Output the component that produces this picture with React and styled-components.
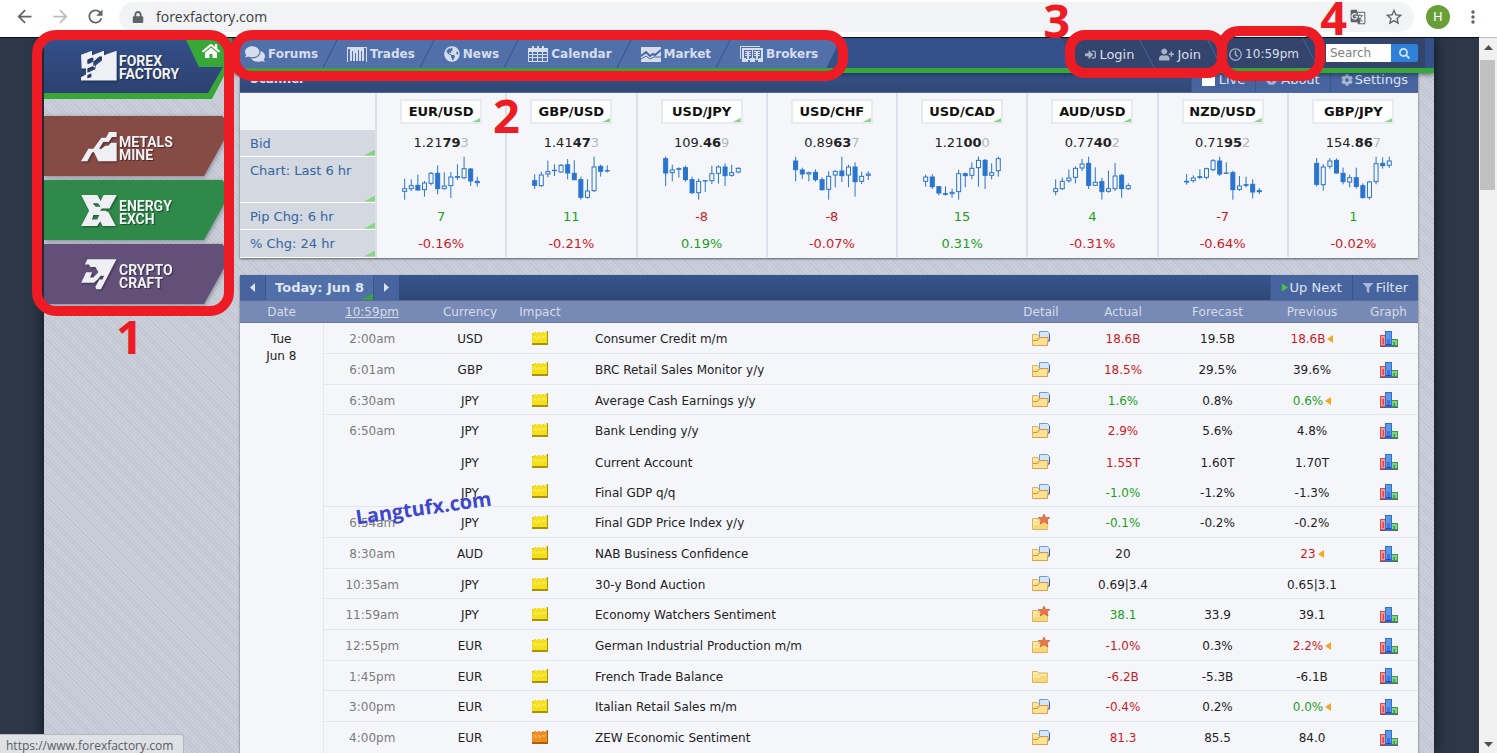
import React from "react";
import styled, { createGlobalStyle, css } from "styled-components";
import {
  FaComments,
  FaSignInAlt,
  FaUserPlus,
  FaRegClock,
  FaCog,
  FaInfoCircle,
  FaHome,
  FaFilter,
  FaGlobeAmericas,
  FaSearch,
  FaLock,
} from "react-icons/fa";
import { MdArrowBack, MdArrowForward, MdRefresh, MdStarBorder, MdMoreVert, MdGTranslate } from "react-icons/md";

const GlobalStyle = createGlobalStyle`
  *, *::before, *::after { box-sizing: border-box; }
  body {
    margin: 0;
    font-family: "DejaVu Sans", Verdana, sans-serif;
    font-size: 12px;
    color: #222;
  }
  a { color: inherit; text-decoration: none; }
  button, input { font: inherit; color: inherit; }
  button { border: 0; background: none; padding: 0; }
  table { border-collapse: collapse; table-layout: fixed; width: 100%; }
  th, td { padding: 0; font-weight: normal; text-align: center; }
`;

/* ---------- browser frame ---------- */

const Browser = styled.div`
  position: relative;
  display: flex;
  flex-direction: column;
  height: 100vh;
  overflow: hidden;
`;

const AddressBar = styled.header`
  flex: none;
  display: flex;
  align-items: center;
  height: 38px;
  padding: 0 9px 4px 13px;
  background: #fff;
  border-bottom: 1px solid #b9bcc0;
`;

const ChromeButton = styled.button`
  display: flex;
  justify-content: center;
  align-items: center;
  width: ${(p) => p.$width || 36}px;
  flex: none;
  font-size: 21px;
  color: ${(p) => (p.$muted ? "#babcbe" : "#5f6368")};
`;

const Omnibox = styled.div`
  flex: 1;
  display: flex;
  align-items: center;
  height: 30px;
  padding: 0 2px 0 13px;
  border-radius: 15px;
  background: #f1f3f4;
  color: #5f6368;
`;

const Url = styled.input`
  flex: 1;
  min-width: 0;
  border: 0;
  padding: 0 0 0 12px;
  background: transparent;
  font-family: "Open Sans", "Segoe UI", sans-serif;
  font-size: 14px;
  color: #3c4043;
  outline: none;
`;

const Avatar = styled.button`
  flex: none;
  width: 24px;
  height: 24px;
  margin: 0 8px 0 12px;
  border-radius: 50%;
  background: #689f38;
  color: #fff;
  font-family: Roboto, sans-serif;
  font-size: 13px;
  text-align: center;
`;

const Viewport = styled.div`
  flex: 1;
  min-height: 0;
  display: flex;
`;

const ScrollBar = styled.div`
  flex: none;
  display: flex;
  flex-direction: column;
  justify-content: space-between;
  width: 18px;
  background: #f1f1f1;
`;

const ScrollArrow = styled.button`
  display: flex;
  align-items: center;
  justify-content: center;
  height: 18px;
  width: 18px;
`;

const ScrollTrack = styled.div`
  flex: 1;
  padding: 4px 2px 0 1px;
`;

const ScrollThumb = styled.div`
  height: 130px;
  background: #c1c1c1;
`;

const StatusBubble = styled.div`
  position: absolute;
  left: 0;
  bottom: 0;
  z-index: 5;
  height: 19px;
  padding: 0 10px 0 6px;
  border: 1px solid #b4b8be;
  border-left: 0;
  border-bottom: 0;
  border-radius: 0 4px 0 0;
  background: #dee1e6;
  color: #5a5d61;
  font-family: "Open Sans", "Segoe UI", sans-serif;
  font-size: 12px;
  line-height: 21px;
`;

/* ---------- site frame ---------- */

const Backdrop = styled.div`
  flex: 1;
  min-width: 0;
  padding: 0 45px 0 44px;
  overflow: hidden;
  background: #2c3848;
  border-top: 1px solid #0b0f16;
  margin-top: -1px;
`;

const Site = styled.div`
  display: flex;
  min-height: 100%;
  background: repeating-linear-gradient(45deg, #bfc4cf 0 1px, #cacfd9 1px 3px);
  box-shadow: 0 0 14px #10161f;
`;

const Sidebar = styled.aside`
  flex: none;
  width: 188px;
  display: flex;
  flex-direction: column;
`;

const Brand = styled.div`
  width: 190px;
  height: 61px;
  margin-bottom: 17px;
  background: #37a737;
  clip-path: polygon(0 0, 190px 0, 190px 34px, 182px 34px, 168px 61px, 0 61px);
  position: relative;
`;

const BrandLink = styled.a`
  display: flex;
  align-items: center;
  gap: 2px;
  height: 55px;
  padding-left: 37px;
  background: linear-gradient(#34508a, #2c416f);
  clip-path: polygon(0 0, 141px 0, 155px 29px, 179px 29px, 164px 55px, 0 55px);
`;

const HomeLink = styled.a`
  position: absolute;
  top: 4px;
  left: 158px;
  font-size: 18px;
  color: #fff;
`;

const Sisters = styled.nav`
  display: flex;
  flex-direction: column;
  gap: 4px;
  filter: drop-shadow(1px 1px 2px rgba(60, 65, 80, 0.5));
`;

const SisterLink = styled.a`
  display: flex;
  align-items: center;
  gap: 2px;
  width: 180px;
  height: 60px;
  padding-left: 37px;
  background: ${(p) => p.$color};
  clip-path: polygon(0 0, 178px 0, 180px 2px, 180px 24px, 160px 60px, 0 60px);
`;

const BrandName = styled.span`
  padding-top: 5px;
  font-family: Roboto, sans-serif;
  font-weight: 700;
  font-size: 14px;
  line-height: 13px;
  color: #f0f2f6;
  text-shadow: 1px 1px 1px rgba(0, 0, 0, 0.45);
`;

const BrandMark = styled.svg`
  flex: none;
  width: 36px;
  height: 31px;
  fill: #eef0f5;
  filter: drop-shadow(1px 1px 1px rgba(0, 0, 0, 0.4));
`;

const Main = styled.main`
  flex: 1;
  min-width: 0;
  display: flex;
  flex-direction: column;
`;

/* ---------- top bar ---------- */

const TopBar = styled.header`
  position: relative;
  z-index: 2;
  flex: none;
  display: flex;
  justify-content: space-between;
  height: 35px;
  padding: 0 9px 0 8px;
  border-bottom: 5px solid #37a737;
  background: #34518c;
  box-shadow: 0 2px 4px rgba(15, 25, 50, 0.5);
`;

const NavLinks = styled.nav`
  display: flex;
  padding-right: 10px;
  background: #5170aa;
  clip-path: polygon(0 0, 100% 0, calc(100% - 15px) 100%, 0 100%);
`;

const NavLink = styled.a`
  position: relative;
  display: flex;
  align-items: center;
  gap: 3px;
  padding: 2px 13px 0 16px;
  font-weight: bold;
  color: #d6deee;
  &:first-child { padding-left: 5px; }
  svg { display: block; }
  &:not(:last-child)::after {
    content: "";
    position: absolute;
    top: 0;
    bottom: 0;
    right: 0;
    width: 1px;
    background: #35528c;
    transform: skewX(-27deg);
  }
`;

const UserBar = styled.div`
  display: flex;
  align-items: center;
  padding: 0 7px 0 24px;
  background: #33456c;
  clip-path: polygon(0 0, 100% 0, 100% 100%, 16px 100%);
`;

const UserLink = styled.a`
  position: relative;
  display: flex;
  align-items: center;
  align-self: stretch;
  gap: 3px;
  padding: ${(p) => p.$pad || "2px 14px 0 12px"};
  font-size: ${(p) => p.$size || 13}px;
  color: #d9deea;
  svg { color: #a8b1c6; }
  &::after {
    content: "";
    position: absolute;
    top: 0;
    bottom: 0;
    right: 0;
    width: 1px;
    background: #46639b;
    transform: skewX(28deg);
  }
`;

const SearchForm = styled.form`
  display: flex;
  height: 18px;
  margin-left: 15px;
`;

const SearchBox = styled.input`
  width: 65px;
  border: 0;
  border-radius: 0;
  padding: 0 4px;
  background: #fff;
  &::placeholder { color: #808080; opacity: 1; }
`;

const SearchButton = styled.button`
  display: flex;
  align-items: center;
  justify-content: center;
  width: 27px;
  border-radius: 0 2px 2px 0;
  background: #2f80d8;
  color: #cfe2f7;
`;

/* ---------- panels ---------- */

const Panels = styled.div`
  display: flex;
  flex-direction: column;
  gap: 17px;
  margin-top: -7px;
  padding: 0 16px 0 8px;
`;

const Panel = styled.section`
  background: #f5f6fa;
  box-shadow: 0 1px 2px rgba(40, 48, 65, 0.7);
`;

const PanelBar = styled.div`
  display: flex;
  align-items: stretch;
  height: ${(p) => p.$height}px;
  background: linear-gradient(#37548e, #2f4875);
  border-bottom: 1px solid #566b9b;
  color: #dfe5f0;
`;

const PanelTitle = styled.h2`
  flex: 1;
  margin: 0;
  padding-left: 10px;
  font-size: 12px;
  line-height: 27px;
`;

const BarOption = styled.label`
  display: flex;
  align-items: center;
  gap: ${(p) => p.$gap || 3}px;
  padding: 1px 10px 0;
  background: #48649f;
  border-left: 1px solid #3a558c;
  font-size: 13px;
  color: #dfe5f0;
  svg { color: #a9b8d6; }
`;

const BarButton = styled(BarOption).attrs({ as: "button", type: "button" })``;

const Tick = styled.input`
  appearance: none;
  width: 13px;
  height: 13px;
  margin: 0;
  background: #fff;
`;

const corner = css`
  position: relative;
  &::after {
    content: "";
    position: absolute;
    right: 0;
    bottom: 0;
    width: ${(p) => p.$corner || 8}px;
    height: ${(p) => (p.$corner > 8 ? 6 : 4)}px;
    background: ${(p) => p.$cornerColor || "#85d685"};
    clip-path: polygon(100% 0, 100% 100%, 0 100%);
  }
`;

const DayPicker = styled.div`
  flex: 1;
  display: flex;
`;

const DayStep = styled.button`
  display: flex;
  align-items: center;
  justify-content: center;
  width: 25px;
  background: #48649f;
`;

const DayButton = styled.button`
  ${corner}
  width: 109px;
  background: #5170aa;
  border: solid #3a558c;
  border-width: 0 1px;
  color: #dfe5f0;
  font-size: 13px;
  font-weight: bold;
`;

/* ---------- scanner ---------- */

const ScannerRow = styled.tr`
  height: ${(p) => p.$height}px;
`;

const LabelCell = styled.th`
  ${corner}
  padding: ${(p) => (p.$top ? "6px" : "1px")} 0 0 10px;
  vertical-align: ${(p) => (p.$top ? "top" : "middle")};
  text-align: left;
  font-size: 13px;
  color: #33669f;
  background: #d4d8e1;
  border-bottom: 1px solid #fff;
`;

const MarketCell = styled.td`
  border-left: 2px solid #dde0e8;
  padding-top: ${(p) => (p.$color ? 2 : 0)}px;
  vertical-align: ${(p) => (p.$top ? "top" : "middle")};
  font-size: 13px;
  line-height: ${(p) => (p.$top ? "0" : "16px")};
  color: ${(p) => p.$color || "#222"};
`;

const PairButton = styled.button`
  ${corner}
  display: inline-block;
  height: 25px;
  width: 82px;
  border: 2px solid #e8eaf1;
  background: #fff;
  color: #111;
  font-size: 13px;
  font-weight: bold;
  line-height: 20px;
`;

const LastDigit = styled.span`
  color: #b4b6bb;
`;

const Candles = styled.svg`
  width: 80px;
  height: 45px;
`;

/* ---------- calendar ---------- */

const HeadCell = styled.th`
  height: 22px;
  padding-top: 1px;
  color: #d5dcea;
  background: #768ab5;
  border-bottom: 1px solid #6579a6;
  text-align: center;
  a { text-decoration: underline; }
`;

const EventRow = styled.tr`
  height: 31px;
  &:nth-child(3n) { height: 30px; }
`;

const Cell = styled.td`
  color: ${(p) => p.$color || "#222"};
  border-top: ${(p) => (p.$joined ? "0" : "1px solid #e4e7ed")};
  padding-top: ${(p) => (p.$joined ? 3 : 2)}px;
  white-space: nowrap;
`;

const IconCell = styled(Cell)`
  padding-top: 0;
  svg { display: block; margin: 0 auto; }
`;

const DateCell = styled(Cell)`
  vertical-align: top;
  padding-top: 8px;
  line-height: 17px;
  border-right: 1px solid #e4e7ed;
`;

const TitleCell = styled(Cell)`
  padding-left: 34px;
  text-align: left;
`;

const Revised = styled.svg`
  margin: 0 0 0 2px;
`;

/* ---------- annotations ---------- */

const Outline = styled.div`
  position: absolute;
  z-index: 10;
  top: ${(p) => p.$top}px;
  left: ${(p) => (p.$left === undefined ? "auto" : p.$left + "px")};
  right: ${(p) => (p.$right === undefined ? "auto" : p.$right + "px")};
  width: ${(p) => p.$width}px;
  height: ${(p) => p.$height}px;
  border: 10px solid #ed1c24;
  border-radius: ${(p) => p.$radius || 24}px;
  pointer-events: none;
`;

const Marker = styled.span`
  position: absolute;
  z-index: 10;
  top: ${(p) => p.$top}px;
  left: ${(p) => (p.$left === undefined ? "auto" : p.$left + "px")};
  right: ${(p) => (p.$right === undefined ? "auto" : p.$right + "px")};
  font-family: "Open Sans", "Segoe UI", sans-serif;
  font-weight: 700;
  font-size: 47px;
  line-height: 46px;
  color: #ed1c24;
`;

const Watermark = styled.span`
  position: absolute;
  z-index: 9;
  top: 494px;
  left: 355px;
  font-family: "Open Sans", "Segoe UI", sans-serif;
  font-weight: 700;
  font-size: 20px;
  line-height: 28px;
  color: #3f48cc;
  transform: rotate(-8deg);
`;

/* ---------- drawings ---------- */

const TradesIcon = () => (
  <svg width="20" height="16" viewBox="0 0 20 16" fill="currentColor">
    <path d="M0 1h20v15h-1V2h-2v13h-2V5h-1v10h-2V4h-1v11H9V7H8v8H6V5H5v10H3V3H1v13H0z" />
    <path d="M3 3h1v12H3zM6 6h1v9H6zM12 5h1v10h-1zM15 6h1v9h-1z" />
  </svg>
);

const CalendarIcon = () => (
  <svg width="20" height="16" viewBox="0 0 20 16" fill="currentColor">
    <path d="M4 0h2v2h3V0h2v2h3V0h2v2h4v14H0V2h4zM1 6v2h3V6zm4 0v2h4V6zm5 0v2h4V6zm5 0v2h4V6zM1 9v2h3V9zm4 0v2h4V9zm5 0v2h4V9zm5 0v2h4V9zM1 12v3h3v-3zm4 0v3h4v-3zm5 0v3h4v-3zm5 0v3h4v-3z" fillRule="evenodd" />
  </svg>
);

const MarketIcon = () => (
  <svg width="20" height="15" viewBox="0 0 20 15">
    <path fill="currentColor" d="M0 0h20v15H0z" />
    <path fill="none" stroke="#4a68a3" strokeWidth="2" d="M0 9l5-4 4 4 3-2 2 1 6-5" />
    <path fill="none" stroke="#4a68a3" d="M0 12l5-3 4 3 4-2 7 0" />
  </svg>
);

const BrokersIcon = () => (
  <svg width="23" height="16" viewBox="0 0 23 16" fill="currentColor">
    <path d="M2 2h21v14h-5v-2h-3v2h-5v-2H8v2H2zm2 2v8h2v1h4v-1h2V4zm9 0v8h2v1h4v-1h2V4z" fillRule="evenodd" />
    <path d="M5 5h6v1H5zM5 7h6v1H5zM5 9h6v1H5zM14 5h6v1h-6zM14 7h6v1h-6zM14 9h6v1h-6zM7 5h2v8H7zM16 5h2v8h-2zM0 0h20v1H1v12H0z" />
  </svg>
);

const ForexMark = () => (
  <BrandMark viewBox="243 147 108 92">
    <path fillRule="evenodd" d="M243 161L276 149V162L312 149V162L350 149V238H243V228L258 220V202H245zM262 176L274 170H280V182L268 188H262zM280 182L298 166H306V178L288 192V198H280zM262 202L276 196V209L264 214H262zM276 196L286 192V204L276 209zM262 222L274 216V228L262 231z" />
  </BrandMark>
);

const MetalsMark = () => (
  <BrandMark viewBox="153 60 108 93">
    <path d="M153 151L175 113H190L214 80H228L237 63H260V78H246L236 93H220L207 113H215L226 104H235L243 95H260V151H205L192 124H187L172 151z" />
  </BrandMark>
);

const EnergyMark = () => (
  <BrandMark viewBox="153 252 108 94">
    <path
      fillRule="evenodd"
      d="M153 252H202L212 270L221 252H261L239 293H216L210 300H226L236 304L258 346H218L211 332L201 346H153L177 300zM188 277H204L212 288H197zM190 313H208L202 326H186z"
    />
  </BrandMark>
);

const CryptoMark = () => (
  <BrandMark viewBox="153 446 108 94">
    <path d="M172 447H260L213 538H199L196 530L208 508H218L222 497H212L203 508L192 518H153L168 486H186L180 502H190L205 486L196 470H181L176 463H164z" />
  </BrandMark>
);

const Triangle = ({ points, color = "#505050", width = 9, height = 9 }) => (
  <svg width={width} height={height} viewBox="0 0 9 9">
    <polygon points={points} fill={color} />
  </svg>
);

const ImpactIcon = ({ level }) => {
  const medium = level === "medium";
  const face = medium ? "#f08c1e" : "#f5df18";
  const edge = medium ? "#a95f0c" : "#a8920a";
  return (
    <svg width="16" height="14" viewBox="0 0 16 14">
      <path d="M0 2h3V1l1 1h3V1l1 1h3V1l1 1h2l1-2 1 0v14H0z" fill={edge} />
      <path d="M0 3l3-2 1 1 3-1 1 1 3-1 1 1 2-1 1 0v11H0z" fill={face} />
      <path d="M1 7l2-2 1 3 3-3 1 3 3-3 1 2 2-3" fill="none" stroke="#fff" strokeOpacity=".4" />
    </svg>
  );
};

const DetailIcon = ({ kind }) => (
  <svg width="19" height="17" viewBox="0 0 19 17">
    <path d="M.5 4.500h5l1 1.500h9v9.500H.5z" fill="#fbe9a8" stroke="#dcb05c" />
    <path d="M1 15l2-7h3l1-1h8.500v8z" fill="#f6d976" />
    {kind === "doc" && (
      <>
        <path d="M7.500 1.500h8l2 2v7h-10z" fill="#d5e5fa" stroke="#6f9bd8" />
        <path d="M17.500 4v7l-2 .5" fill="none" stroke="#2f63b0" />
        <path d="M1 9.500h5l1-2h9v8H1z" fill="#fae394" />
        <path d="M1 10.500h4.500l2-3h8.500v5" fill="none" stroke="#d9923f" />
        <path d="M.5 15.500h15v-4" fill="none" stroke="#dca04a" />
      </>
    )}
    {kind !== "doc" && <path d="M2 10h5l1-2h6" fill="none" stroke="#fff3c9" />}
    {kind === "star" && (
      <path d="M12 0l1.500 3.500H18l-3.200 2.600 1.200 3.900-4-2.200L8 10l1.200-3.900L6 3.500h4.500z" fill="#e87848" stroke="#c54a30" strokeWidth=".6" />
    )}
  </svg>
);

const GraphIcon = () => (
  <svg width="18" height="17" viewBox="0 0 18 17">
    <path d="M0 5h6v11H0z" fill="#d94a4a" />
    <path d="M1 6h4v9H1z" fill="#f79a95" />
    <path d="M2.500 8h1.500v6H2.500z" fill="#ee3f3f" />
    <path d="M11 9h7v7h-7z" fill="#3d9a48" />
    <path d="M12 10h5v5h-5z" fill="#86cf8c" />
    <path d="M13.500 12H15v3h-1.500z" fill="#36a040" />
    <path d="M5 1h7v15H5z" fill="#2f6fca" />
    <path d="M6 2h5v13H6z" fill="#5b9ae8" />
    <path d="M7 9h3v6H7z" fill="#3a78e0" />
    <path d="M6 14h5v1H6z" fill="#2343dc" />
    <path d="M0 16h18v1H0z" fill="#5b5f80" />
  </svg>
);

/* ---------- data ---------- */

const pairs = [
  { name: "EUR/USD", bid: ["1.21", "79", "3"], pip: 7, pct: "-0.16%",
    bars: [[268,331,297,307,0],[270,305,288,299,0],[256,304,287,303,1],[275,322,280,302,0],[248,288,251,283,0],[228,315,251,299,1],[249,300,289,299,0],[248,326,262,290,0],[225,272,261,265,1],[202,270,237,266,0],[236,290,238,276,1],[262,292,275,281,1]] },
  { name: "GBP/USD", bid: ["1.41", "47", "3"], pip: 11, pct: "-0.21%",
    bars: [[255,299,273,289,1],[247,293,256,290,0],[214,264,246,255,0],[225,260,242,245,1],[224,250,227,249,0],[209,270,225,252,1],[213,273,251,272,1],[262,331,270,325,1],[270,328,304,325,0],[202,308,232,305,0],[226,262,230,247,1],[228,250,243,246,1]] },
  { name: "USD/JPY", bid: ["109.", "46", "9"], pip: -8, pct: "0.19%",
    bars: [[202,290,207,252,1],[226,276,241,251,0],[234,265,237,241,0],[229,277,234,272,1],[262,314,270,311,1],[267,331,275,311,0],[274,308,273,276,1],[229,284,252,275,0],[228,283,232,253,0],[222,290,232,260,1],[226,262,249,259,0],[234,252,236,249,0]] },
  { name: "USD/CHF", bid: ["0.89", "63", "7"], pip: -8, pct: "-0.07%",
    bars: [[202,276,214,242,1],[235,269,241,255,1],[247,276,249,255,0],[240,277,248,272,1],[264,304,270,302,1],[246,331,260,301,0],[243,294,245,258,0],[202,278,244,260,1],[226,294,232,258,0],[219,322,232,278,1],[247,284,260,277,0],[246,272,253,259,0]] },
  { name: "USD/CAD", bid: ["1.21", "00", "0"], pip: 15, pct: "0.31%",
    bars: [[256,292,262,277,0],[255,299,262,293,1],[291,318,291,312,1],[291,319,312,316,1],[298,325,308,314,0],[241,331,252,308,0],[250,294,252,260,1],[219,270,236,259,0],[202,292,212,236,0],[209,299,212,259,1],[222,270,249,259,0],[202,262,207,245,0]] },
  { name: "AUD/USD", bid: ["0.77", "40", "2"], pip: 4, pct: "-0.31%",
    bars: [[270,318,297,308,0],[265,302,275,299,0],[240,280,265,275,0],[231,282,236,265,0],[209,245,223,237,0],[202,299,221,289,1],[234,290,278,289,0],[265,331,276,308,1],[244,310,297,307,0],[221,305,259,299,0],[253,325,257,299,1],[282,302,288,299,0]] },
  { name: "NZD/USD", bid: ["0.71", "95", "2"], pip: -7, pct: "-0.64%",
    bars: [[254,286,275,279,1],[258,280,265,275,0],[240,270,261,265,1],[235,270,237,265,0],[209,246,213,242,0],[202,260,214,255,1],[219,252,250,253,1],[244,331,249,302,1],[260,305,289,301,0],[262,295,285,289,1],[270,327,284,309,1],[296,314,303,308,1]] },
  { name: "GBP/JPY", bid: ["154.", "86", "7"], pip: 1, pct: "-0.02%",
    bars: [[206,292,221,286,1],[224,304,232,287,0],[206,238,214,232,0],[207,252,212,252,1],[235,285,251,278,1],[256,294,264,279,0],[235,298,264,292,1],[282,327,288,326,1],[274,331,277,325,0],[202,285,222,278,0],[204,238,221,230,1],[202,236,214,229,0]] },
];

/* value prefixes: "+" better than forecast, "!" worse, none neutral */
const events = [
  { time: "2:00am", cur: "USD", title: "Consumer Credit m/m", icon: "doc", actual: "!18.6B", forecast: "19.5B", previous: "!18.6B", revised: true },
  { time: "6:01am", cur: "GBP", title: "BRC Retail Sales Monitor y/y", icon: "doc", actual: "!18.5%", forecast: "29.5%", previous: "39.6%" },
  { time: "6:30am", cur: "JPY", title: "Average Cash Earnings y/y", icon: "doc", actual: "+1.6%", forecast: "0.8%", previous: "+0.6%", revised: true },
  { time: "6:50am", cur: "JPY", title: "Bank Lending y/y", icon: "doc", actual: "!2.9%", forecast: "5.6%", previous: "4.8%" },
  { time: "", cur: "JPY", title: "Current Account", icon: "doc", actual: "!1.55T", forecast: "1.60T", previous: "1.70T" },
  { time: "", cur: "JPY", title: "Final GDP q/q", icon: "doc", actual: "+-1.0%", forecast: "-1.2%", previous: "-1.3%" },
  { time: "6:54am", cur: "JPY", title: "Final GDP Price Index y/y", icon: "star", actual: "+-0.1%", forecast: "-0.2%", previous: "-0.2%" },
  { time: "8:30am", cur: "AUD", title: "NAB Business Confidence", icon: "doc", actual: "20", forecast: "", previous: "!23", revised: true },
  { time: "10:35am", cur: "JPY", title: "30-y Bond Auction", icon: "doc", actual: "0.69|3.4", forecast: "", previous: "0.65|3.1", noGraph: true },
  { time: "11:59am", cur: "JPY", title: "Economy Watchers Sentiment", icon: "star", actual: "+38.1", forecast: "33.9", previous: "39.1" },
  { time: "12:55pm", cur: "EUR", title: "German Industrial Production m/m", icon: "star", actual: "!-1.0%", forecast: "0.3%", previous: "!2.2%", revised: true },
  { time: "1:45pm", cur: "EUR", title: "French Trade Balance", icon: "folder", actual: "!-6.2B", forecast: "-5.3B", previous: "-6.1B" },
  { time: "3:00pm", cur: "EUR", title: "Italian Retail Sales m/m", icon: "doc", actual: "!-0.4%", forecast: "0.2%", previous: "+0.0%", revised: true },
  { time: "4:00pm", cur: "EUR", title: "ZEW Economic Sentiment", icon: "doc", impact: "medium", actual: "!81.3", forecast: "85.5", previous: "84.0" },
];

const GREEN = "#1da01d";
const RED = "#cc1a24";
const tone = (v) => (v[0] === "+" ? GREEN : v[0] === "!" ? RED : undefined);
const plain = (v) => v.replace(/^[+!]/, "");

const CandleChart = ({ bars, label }) => (
  <Candles viewBox="0 200 240 135" role="img" aria-label={label}>
    {bars.map(([high, low, top, bottom, filled], i) => {
      const x = 11 + i * 19.8;
      return (
        <g key={i} stroke="#2a74cf" strokeWidth="3" fill={filled ? "#2a74cf" : "#f5f6fa"}>
          <path d={`M${x} ${high}V${low}`} />
          <rect x={x - 6} y={top + 1} width="12" height={Math.max(bottom - top - 2, 0.5)} />
        </g>
      );
    })}
  </Candles>
);

const Scanner = () => (
  <Panel>
    <PanelBar $height={27}>
      <PanelTitle>Scanner</PanelTitle>
      <BarOption $gap={4}>
        <Tick type="checkbox" />
        Live
      </BarOption>
      <BarButton $gap={4}><FaInfoCircle size={11} />About</BarButton>
      <BarButton $gap={2}><FaCog size={12} />Settings</BarButton>
    </PanelBar>
    <table>
      <colgroup>
        <col style={{ width: 136 }} />
        {pairs.map((p) => <col key={p.name} />)}
      </colgroup>
      <tbody>
        <ScannerRow $height={37}>
          <td />
          {pairs.map((p) => (
            <MarketCell key={p.name}><PairButton>{p.name}</PairButton></MarketCell>
          ))}
        </ScannerRow>
        <ScannerRow $height={26}>
          <LabelCell $corner={11}>Bid</LabelCell>
          {pairs.map((p) => (
            <MarketCell key={p.name}>
              {p.bid[0]}<b>{p.bid[1]}</b><LastDigit>{p.bid[2]}</LastDigit>
            </MarketCell>
          ))}
        </ScannerRow>
        <ScannerRow $height={46}>
          <LabelCell $corner={11} $top>Chart: Last 6 hr</LabelCell>
          {pairs.map((p) => (
            <MarketCell key={p.name} $top><CandleChart bars={p.bars} label={p.name} /></MarketCell>
          ))}
        </ScannerRow>
        <ScannerRow $height={27}>
          <LabelCell $corner={11}>Pip Chg: 6 hr</LabelCell>
          {pairs.map((p) => (
            <MarketCell key={p.name} $color={p.pip < 0 ? RED : GREEN}>{p.pip}</MarketCell>
          ))}
        </ScannerRow>
        <ScannerRow $height={28}>
          <LabelCell $corner={11}>% Chg: 24 hr</LabelCell>
          {pairs.map((p) => (
            <MarketCell key={p.name} $color={p.pct[0] === "-" ? RED : GREEN}>{p.pct}</MarketCell>
          ))}
        </ScannerRow>
      </tbody>
    </table>
  </Panel>
);

const columnWidths = [83, 98, 98, 42, undefined, 70, 94, 95, 94, 59];

const Calendar = () => (
  <Panel>
    <PanelBar $height={26}>
      <DayPicker>
        <DayStep aria-label="Previous day"><Triangle points="7,0 7,9 2,4.5" color="#dce4f3" /></DayStep>
        <DayButton $corner={12} $cornerColor="#37a737">Today: Jun 8</DayButton>
        <DayStep aria-label="Next day"><Triangle points="2,0 2,9 7,4.5" color="#dce4f3" /></DayStep>
      </DayPicker>
      <BarButton $gap={1}><Triangle points="1,0 1,9 8,4.5" color="#47c447" width={8} />Up Next</BarButton>
      <BarButton $gap={3}><FaFilter size={10} />Filter</BarButton>
    </PanelBar>
    <table>
      <colgroup>
        {columnWidths.map((w, i) => <col key={i} style={{ width: w }} />)}
      </colgroup>
      <thead>
        <tr>
          <HeadCell>Date</HeadCell>
          <HeadCell><a href="#timezone">10:59pm</a></HeadCell>
          <HeadCell>Currency</HeadCell>
          <HeadCell>Impact</HeadCell>
          <HeadCell aria-label="Event" />
          <HeadCell>Detail</HeadCell>
          <HeadCell>Actual</HeadCell>
          <HeadCell>Forecast</HeadCell>
          <HeadCell>Previous</HeadCell>
          <HeadCell>Graph</HeadCell>
        </tr>
      </thead>
      <tbody>
        {events.map((e, i) => {
          const joined = !e.time;
          return (
            <EventRow key={e.title}>
              {i === 0 && <DateCell rowSpan={events.length}>Tue<br />Jun 8</DateCell>}
              <Cell $joined={joined} $color="#7b7b7b">{e.time}</Cell>
              <Cell $joined={joined}>{e.cur}</Cell>
              <IconCell $joined={joined}><ImpactIcon level={e.impact} /></IconCell>
              <TitleCell $joined={joined}>{e.title}</TitleCell>
              <IconCell $joined={joined}><DetailIcon kind={e.icon} /></IconCell>
              <Cell $joined={joined} $color={tone(e.actual)}>{plain(e.actual)}</Cell>
              <Cell $joined={joined}>{e.forecast}</Cell>
              <Cell $joined={joined} $color={tone(e.previous)}>
                {plain(e.previous)}
                {e.revised && (
                  <Revised width="6" height="8" viewBox="0 0 6 8"><path d="M6 0v8L0 4z" fill="#f5a623" /></Revised>
                )}
              </Cell>
              <IconCell $joined={joined}>{!e.noGraph && <GraphIcon />}</IconCell>
            </EventRow>
          );
        })}
      </tbody>
    </table>
  </Panel>
);

const Header = () => (
  <TopBar>
    <NavLinks>
      <NavLink href="#forums"><FaComments size={20} />Forums</NavLink>
      <NavLink href="#trades"><TradesIcon />Trades</NavLink>
      <NavLink href="#news"><FaGlobeAmericas size={16} />News</NavLink>
      <NavLink href="#calendar"><CalendarIcon />Calendar</NavLink>
      <NavLink href="#market"><MarketIcon />Market</NavLink>
      <NavLink href="#brokers"><BrokersIcon />Brokers</NavLink>
    </NavLinks>
    <UserBar>
      <UserLink href="#login" $pad="2px 13px 0 0"><FaSignInAlt size={11} />Login</UserLink>
      <UserLink href="#join"><FaUserPlus size={15} />Join</UserLink>
      <UserLink href="#time" $size={12} $pad="2px 12px 0 14px"><FaRegClock size={13} />10:59pm</UserLink>
      <SearchForm role="search">
        <SearchBox type="text" placeholder="Search" aria-label="Search" />
        <SearchButton type="button" aria-label="Go"><FaSearch size={11} /></SearchButton>
      </SearchForm>
    </UserBar>
  </TopBar>
);

const sisters = [
  { id: "metals", color: "#874b45", Mark: MetalsMark, lines: ["METALS", "MINE"] },
  { id: "energy", color: "#2f8a49", Mark: EnergyMark, lines: ["ENERGY", "EXCH"] },
  { id: "crypto", color: "#625079", Mark: CryptoMark, lines: ["CRYPTO", "CRAFT"] },
];

export default function App() {
  return (
    <Browser>
      <GlobalStyle />
      <AddressBar>
        <ChromeButton $width={22} aria-label="Back"><MdArrowBack /></ChromeButton>
        <ChromeButton $width={50} $muted aria-label="Forward"><MdArrowForward /></ChromeButton>
        <ChromeButton $width={21} aria-label="Reload"><MdRefresh size={23} /></ChromeButton>
        <ChromeButton $width={13} as="span" />
        <Omnibox>
          <FaLock size={12} />
          <Url type="text" defaultValue="forexfactory.com" aria-label="Address" />
          <ChromeButton aria-label="Translate"><MdGTranslate size={16} /></ChromeButton>
          <ChromeButton aria-label="Bookmark"><MdStarBorder size={20} /></ChromeButton>
        </Omnibox>
        <Avatar>H</Avatar>
        <ChromeButton $width={30} aria-label="Menu"><MdMoreVert size={20} /></ChromeButton>
      </AddressBar>
      <Viewport>
        <Backdrop>
          <Site>
            <Sidebar>
              <Brand>
                <BrandLink href="#home">
                  <ForexMark />
                  <BrandName>FOREX<br />FACTORY</BrandName>
                </BrandLink>
                <HomeLink href="#home" aria-label="Home"><FaHome /></HomeLink>
              </Brand>
              <Sisters>
                {sisters.map(({ id, color, Mark, lines }) => (
                  <SisterLink key={id} href={`#${id}`} $color={color}>
                    <Mark />
                    <BrandName>{lines[0]}<br />{lines[1]}</BrandName>
                  </SisterLink>
                ))}
              </Sisters>
            </Sidebar>
            <Main>
              <Header />
              <Panels>
                <Scanner />
                <Calendar />
              </Panels>
            </Main>
          </Site>
        </Backdrop>
        <ScrollBar>
          <ScrollArrow aria-label="Scroll up"><Triangle points="0,7 9,7 4.500,2" /></ScrollArrow>
          <ScrollTrack><ScrollThumb /></ScrollTrack>
          <ScrollArrow aria-label="Scroll down"><Triangle points="0,2 9,2 4.500,7" /></ScrollArrow>
        </ScrollBar>
      </Viewport>
      <StatusBubble>https://www.forexfactory.com</StatusBubble>
      <Watermark>Langtufx.com</Watermark>
      <Outline $left={32} $top={30} $width={202} $height={286} />
      <Outline $left={230} $top={30} $width={618} $height={51} $radius={22} />
      <Outline $right={270} $top={30} $width={162} $height={48} $radius={20} />
      <Outline $right={172} $top={26} $width={108} $height={55} $radius={22} />
      <Marker $left={116} $top={313}>1</Marker>
      <Marker $left={493} $top={92}>2</Marker>
      <Marker $right={427} $top={-3}>3</Marker>
      <Marker $right={150} $top={-6}>4</Marker>
    </Browser>
  );
}
